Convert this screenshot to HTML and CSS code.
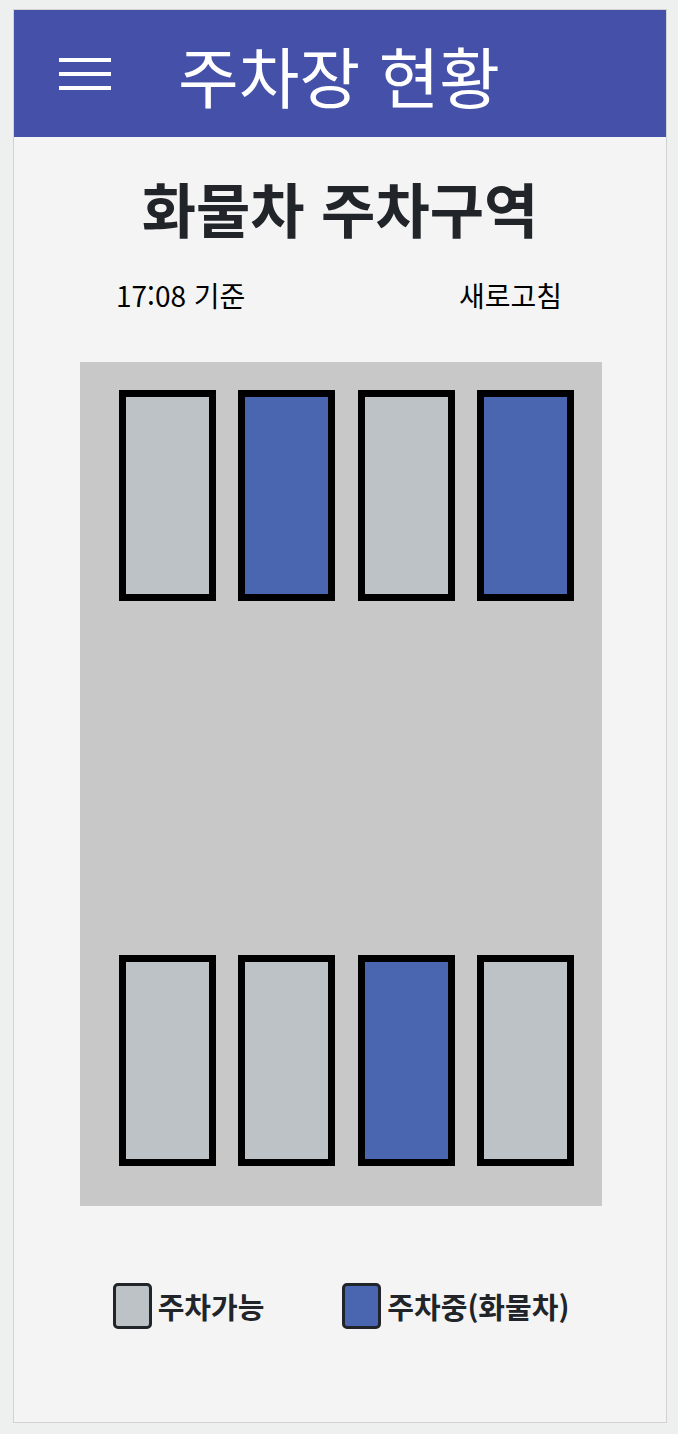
FILE: index.html
```html
<!DOCTYPE html>
<html lang="ko">
<head>
<meta charset="utf-8">
<title>주차장 현황</title>
<link rel="stylesheet" href="styles.css">
</head>
<body>
<div class="card">
  <header class="topbar">
    <svg class="menu" width="52" height="34" viewBox="0 0 52 34">
      <rect x="0" y="0" width="52" height="4" fill="#fff"/>
      <rect x="0" y="14" width="52" height="4" fill="#fff"/>
      <rect x="0" y="28" width="52" height="4" fill="#fff"/>
    </svg>
    <h1 class="title">주차장 현황</h1>
  </header>
  <main class="content">
    <h2 class="zone">화물차 주차구역</h2>
    <div class="info">
      <span>17:08 기준</span>
      <span>새로고침</span>
    </div>
    <div class="lot">
      <div class="row">
        <div class="space empty"></div>
        <div class="space busy"></div>
        <div class="space empty"></div>
        <div class="space busy"></div>
      </div>
      <div class="row">
        <div class="space empty"></div>
        <div class="space empty"></div>
        <div class="space busy"></div>
        <div class="space empty"></div>
      </div>
    </div>
    <div class="legend">
      <div class="item"><span class="swatch empty"></span><span>주차가능</span></div>
      <div class="item"><span class="swatch busy"></span><span>주차중(화물차)</span></div>
    </div>
  </main>
</div>
</body>
</html>
```

FILE: styles.css
```css
html, body {
  margin: 0;
  padding: 0;
}
body {
  background: #eef0ef;
  font-family: "Noto Sans CJK KR", "Noto Sans", sans-serif;
  color: #000;
}
.card {
  margin: 9px 11px 0 13px;
  height: 1414px;
  border: 1px solid #d2d2d2;
  background: #f4f4f4;
  box-sizing: border-box;
}
.topbar {
  height: 127px;
  background: #4551a8;
  display: flex;
  align-items: center;
  padding-left: 45px;
}
.menu {
  display: block;
  margin-top: 2px;
}
.title {
  margin: 0 0 0 67px;
  color: #fff;
  font-weight: 400;
  font-size: 66px;
  line-height: 1;
  letter-spacing: 0;
}
.content {
  display: flex;
  flex-direction: column;
  align-items: center;
}
.zone {
  margin: 33px 0 0;
  font-size: 59px;
  font-weight: 700;
  color: #212529;
  line-height: 1.3;
}
.info {
  width: 446px;
  display: flex;
  justify-content: space-between;
  font-size: 28px;
  margin-top: 29px;
  line-height: 1.4;
  padding-right: 2px;
}
.lot {
  margin-top: 47px;
  margin-left: 2px;
  width: 522px;
  height: 844px;
  background: #c8c8c8;
  box-sizing: border-box;
  padding: 28px 28px 40px 39px;
  display: flex;
  flex-direction: column;
  justify-content: space-between;
}
.row {
  display: flex;
  gap: 22.5px;
}
.space {
  width: 97px;
  height: 211px;
  border: 7px solid #000;
  box-sizing: border-box;
}
.empty { background: #bcc2c5; }
.busy { background: #4a66b0; }
.legend {
  margin-top: 77px;
  display: flex;
  gap: 78px;
  padding-left: 2px;
}
.item {
  display: flex;
  align-items: center;
  gap: 6px;
  font-size: 29px;
  font-weight: 700;
  color: #212529;
}
.swatch {
  width: 39px;
  height: 46px;
  box-sizing: border-box;
  border: 3px solid #212529;
  border-radius: 5px;
}
```
